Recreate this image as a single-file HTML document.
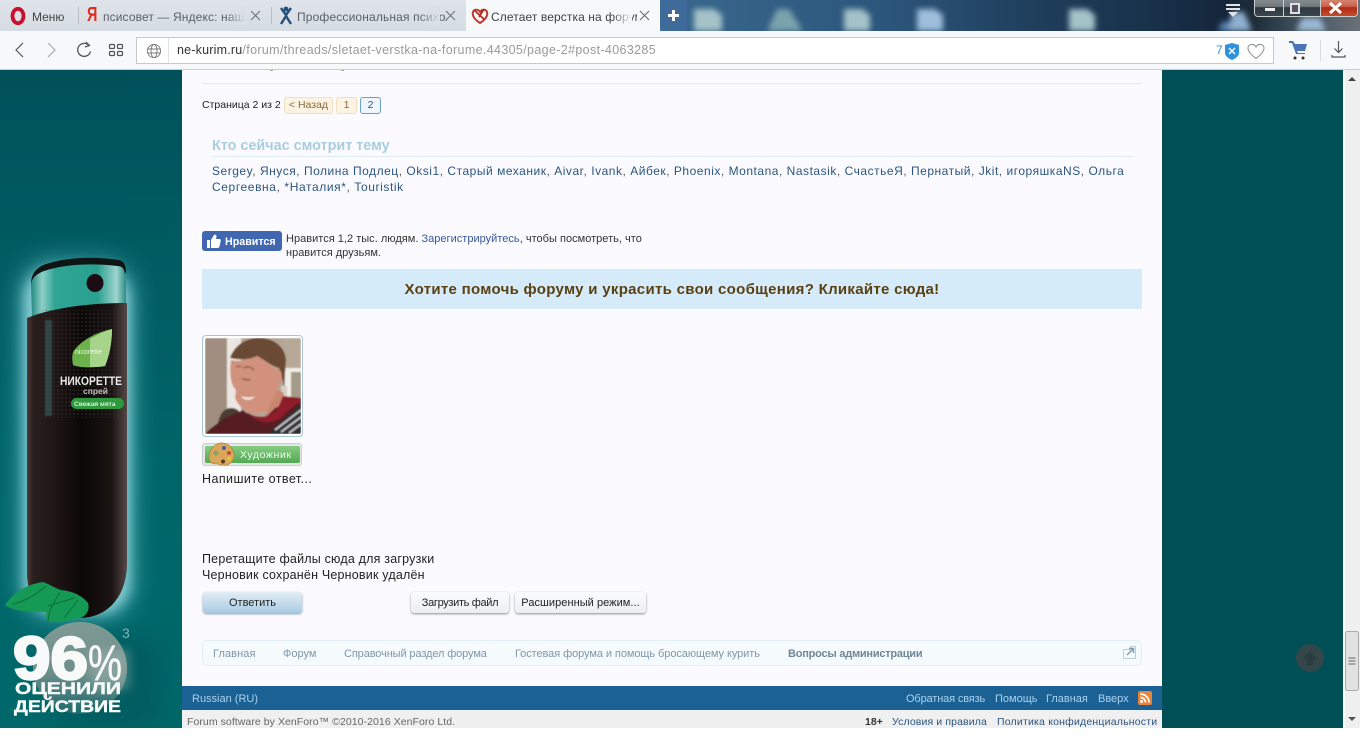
<!DOCTYPE html>
<html lang="ru"><head><meta charset="utf-8"><title>Слетает верстка на форуме</title>
<style>
html,body{margin:0;padding:0;background:#fff}
body{width:1360px;height:748px;position:relative;overflow:hidden;font-family:"Liberation Sans","Noto Sans CJK SC",sans-serif;color:#222}
.a{position:absolute;white-space:nowrap}
.l{color:#2b5580}
svg{display:block}
</style></head><body>

<!-- desktop strip -->
<div class="a" style="left:687px;top:0;width:673px;height:31px;overflow:hidden;background:linear-gradient(90deg,#38668c 0,#2c557a 30%,#20405e 50%,#18304a 70%,#14263a 80%,#1d2b38 84%,#465664 92%,#6a7078 100%)">
<svg width="673" height="31" style="filter:blur(3px)">
<path d="M7 9h20l8 6v16H7z" fill="#a4c2c8"/>
<path d="M90 9h12l14 22H80z" fill="#7ba3ac"/>
<path d="M157 9h18l8 6v16h-26z" fill="#a4c2c8"/>
<path d="M230 9h18l8 6v16h-26z" fill="#9ebedc"/>
<path d="M382 9h18l8 6v16h-26z" fill="#a4c2c8"/>
<path d="M535 22h26l4 9h-34z" fill="#5d85b8"/>
<path d="M545 12h12l8 19h-24z" fill="#8fb0d0"/>
<path d="M615 18h18l6 13h-30z" fill="#9ab8d2"/>
</svg></div>

<!-- tabs -->
<div class="a" style="left:0;top:0;width:466px;height:31px;background:linear-gradient(#dfe4ea,#d6dce3)"></div>
<div class="a" style="left:78px;top:7px;width:1px;height:17px;background:#b8bfc7"></div>
<div class="a" style="left:271px;top:7px;width:1px;height:17px;background:#b8bfc7"></div>
<div class="a" style="left:466px;top:0;width:193px;height:31px;background:#f6f8fa"></div>
<div class="a" style="left:660px;top:0;width:27px;height:31px;background:#3e6b9a"></div>
<div class="a" style="left:668px;top:14px;width:11px;height:3px;background:#fff"></div>
<div class="a" style="left:672px;top:10px;width:3px;height:11px;background:#fff"></div>

<svg class="a" style="left:9px;top:7px" width="18" height="18"><ellipse cx="9" cy="9" rx="5.500" ry="7.200" fill="none" stroke="#c8102e" stroke-width="3.800"/></svg>
<div class="a" style="left:32px;top:10px;font-size:12px;color:#444">Меню</div>

<div class="a" style="left:87px;top:5px;font-size:20px;font-weight:bold;color:#e32b1d;line-height:21px;transform:scaleX(.72);transform-origin:left top">Я</div>
<div class="a" style="left:103px;top:10px;width:143px;overflow:hidden;font-size:12px;color:#5a6068;letter-spacing:.12px">псисовет — Яндекс: нашлось</div>
<div class="a" style="left:226px;top:6px;width:20px;height:20px;background:linear-gradient(90deg,rgba(222,227,233,0),#dbe0e6)"></div>
<svg class="a" style="left:250px;top:10px" width="11" height="11"><path d="M1 1l9 9M10 1l-9 9" stroke="#6a7078" stroke-width="1"/></svg>

<svg class="a" style="left:279px;top:6px" width="14" height="20"><circle cx="7" cy="3" r="2.400" fill="#25507c"/><path d="M2 2l5 7 5-7M7 9v2M2 18l5-8 5 8" fill="none" stroke="#25507c" stroke-width="2.400"/></svg>
<div class="a" style="left:297px;top:10px;width:150px;overflow:hidden;font-size:12px;color:#5a6068;letter-spacing:.15px">Профессиональная психология</div>
<div class="a" style="left:420px;top:6px;width:20px;height:20px;background:linear-gradient(90deg,rgba(222,227,233,0),#dbe0e6)"></div>
<svg class="a" style="left:445px;top:10px" width="11" height="11"><path d="M1 1l9 9M10 1l-9 9" stroke="#6a7078" stroke-width="1"/></svg>

<svg class="a" style="left:471px;top:7px" width="18" height="18"><path d="M9 16C3 12 1 8 2 5c1-3 5-3 7 0 2-3 6-3 7 0 1 3-1 7-7 11z" fill="#fff" stroke="#c0392b" stroke-width="2"/><path d="M4 4l10 9M13 2L8 10" stroke="#b22a22" stroke-width="1.800"/></svg>
<div class="a" style="left:491px;top:10px;width:146px;overflow:hidden;font-size:12px;color:#3c4248;letter-spacing:.1px">Слетает верстка на форуме</div>
<div class="a" style="left:612px;top:6px;width:20px;height:20px;background:linear-gradient(90deg,rgba(246,248,250,0),#f6f8fa)"></div>
<svg class="a" style="left:639px;top:10px" width="11" height="11"><path d="M1 1l9 9M10 1l-9 9" stroke="#666" stroke-width="1"/></svg>

<!-- window controls -->
<svg class="a" style="left:1224px;top:3px" width="18" height="15"><path d="M2 1h14v2H2zM2 5h14v2H2z" fill="#dfe4e8"/><path d="M4 9h10l-5 5z" fill="#dfe4e8"/></svg>
<div class="a" style="left:1254px;top:-2px;width:104px;height:19px;border:1px solid #c8cdd0;border-radius:0 0 4px 4px;box-sizing:border-box;overflow:hidden;background:#3a4248">
<div class="a" style="left:0;top:0;width:28px;height:17px;border-right:1px solid #c8cdd0;background:linear-gradient(#878e92 0,#70787c 45%,#2e373e 50%,#3a454e 100%)"></div>
<div class="a" style="left:29px;top:0;width:36px;height:17px;border-right:1px solid #c8cdd0;background:linear-gradient(#878e92 0,#70787c 45%,#2e373e 50%,#3a454e 100%)"></div>
<div class="a" style="left:66px;top:0;width:38px;height:17px;background:linear-gradient(#d88a76 0,#c8604a 45%,#b02a16 50%,#c44c2a 100%)"></div>
<div class="a" style="left:10px;top:9px;width:10px;height:3px;background:#eee"></div>
<div class="a" style="left:35px;top:4px;width:6px;height:7px;border:2px solid #dde;background:#555"></div>
<svg class="a" style="left:73px;top:3px" width="15" height="12"><path d="M2 1l11 10M13 1L2 11" stroke="#fff" stroke-width="3"/></svg>
</div>

<!-- toolbar -->
<div class="a" style="left:0;top:31px;width:1360px;height:39px;background:#f7f8f9;border-bottom:1px solid #c8cdd0;box-sizing:border-box"></div>
<svg class="a" style="left:12px;top:40px" width="120" height="20" fill="none">
<path d="M11 3L4 10l7 7" stroke="#555" stroke-width="1.200"/>
<path d="M36 3l7 7-7 7" stroke="#aaa" stroke-width="1.200"/>
<path d="M77 5.500a6.500 6.500 0 1 0 1.500 6" stroke="#555" stroke-width="1.300"/><path d="M74 2l3.500 3.500L73 7" stroke="#555" stroke-width="1.200"/>
<rect x="97.500" y="4.500" width="5" height="4" rx="1" stroke="#555" stroke-width="1.200"/><rect x="105.500" y="4.500" width="5" height="4" rx="1" stroke="#555" stroke-width="1.200"/><rect x="97.500" y="11.500" width="5" height="4" rx="1" stroke="#555" stroke-width="1.200"/><rect x="105.500" y="11.500" width="5" height="4" rx="1" stroke="#555" stroke-width="1.200"/>
</svg>
<div class="a" style="left:136px;top:37px;width:1138px;height:27px;background:#fff;border:1px solid #c6cacc;box-sizing:border-box"></div>
<svg class="a" style="left:146px;top:43px" width="16" height="16" fill="none" stroke="#777" stroke-width=".9"><circle cx="8" cy="8" r="6.600"/><ellipse cx="8" cy="8" rx="3" ry="6.600"/><path d="M1.500 6h13M1.500 10h13"/></svg>
<div class="a" style="left:168px;top:38px;width:1px;height:25px;background:#e2e4e6"></div>
<div class="a" style="left:177px;top:43px;font-size:12.500px;color:#333;letter-spacing:.2px">ne-kurim.ru<span style="color:#999;letter-spacing:.35px">/forum/threads/sletaet-verstka-na-forume.44305/page-2#post-4063285</span></div>
<div class="a" style="left:1216px;top:43px;font-size:12px;color:#3f8cd0">7</div>
<svg class="a" style="left:1224px;top:43px" width="16" height="17"><path d="M1 2l7-2 7 2v8c0 3-4 6-7 7-3-1-7-4-7-7z" fill="#2d93dc"/><path d="M5 5l6 6M11 5l-6 6" stroke="#fff" stroke-width="1.500"/></svg>
<svg class="a" style="left:1247px;top:43px" width="18" height="17"><path d="M9 15.500C3 11 1 8 1 5c0-4 6-5 8-1 2-4 8-3 8 1 0 3-2 6-8 10.500z" fill="#fff" stroke="#8a8f93" stroke-width="1"/></svg>
<svg class="a" style="left:1288px;top:40px" width="20" height="20"><path d="M1 1h4l2 3h12l-2 7H9l1 2h7v1H8L4 3H1z" fill="#4a74b8"/><circle cx="7" cy="18" r="1.500" fill="#333"/><circle cx="15" cy="18" r="1.500" fill="#333"/></svg>
<div class="a" style="left:1320px;top:40px;width:1px;height:21px;background:#d8dbdd"></div>
<svg class="a" style="left:1331px;top:40px" width="15" height="20" fill="none" stroke="#555" stroke-width="1.200"><path d="M7.500 1v11M3.500 8.500l4 4 4-4M1 15v2h13v-2"/></svg>

<!-- page backgrounds -->
<div class="a" style="left:1162px;top:70px;width:181px;height:658px;background:#004f57"></div>
<div class="a" style="left:1345px;top:70px;width:15px;height:658px;background:#f0f0f0"></div>
<svg class="a" style="left:1344px;top:70px" width="16" height="658">
<path d="M4 11l4-4 4 4z" fill="#444"/>
<rect x="1.500" y="561.500" width="13" height="59" rx="2" fill="#e2e2e2" stroke="#aaa"/>
<path d="M4.500 588h7M4.500 591h7M4.500 594h7" stroke="#666"/>
<path d="M4 647h8l-4 4z" fill="#555"/>
</svg>
<div class="a" style="left:1296px;top:644px;width:28px;height:28px;border-radius:50%;background:#33464a"></div>
<svg class="a" style="left:1296px;top:644px" width="28" height="28"><path d="M14 7l7 8h-4v6h-6v-6H7z" fill="#2a3c40"/></svg>

<!-- left ad -->
<svg class="a" style="left:0;top:70px" width="182" height="658" viewBox="0 70 182 658">
<defs>
<linearGradient id="bg" x1="0" y1="0" x2="0" y2="1"><stop offset="0" stop-color="#00505a"/><stop offset=".22" stop-color="#005a60"/><stop offset=".6" stop-color="#006568"/><stop offset="1" stop-color="#00686a"/></linearGradient>
<filter id="b12" x="-60%" y="-25%" width="220%" height="150%"><feGaussianBlur stdDeviation="13"/></filter>
<filter id="b6" x="-40%" y="-20%" width="180%" height="140%"><feGaussianBlur stdDeviation="6"/></filter>
<filter id="b5" x="-30%" y="-20%" width="160%" height="140%"><feGaussianBlur stdDeviation="5"/></filter>
<filter id="b1"><feGaussianBlur stdDeviation=".7"/></filter>
<linearGradient id="body" x1="0" x2="1"><stop offset="0" stop-color="#4b3b37"/><stop offset=".06" stop-color="#2a1f1e"/><stop offset=".35" stop-color="#1a1212"/><stop offset=".55" stop-color="#0c0808"/><stop offset=".85" stop-color="#1b1413"/><stop offset="1" stop-color="#564947"/></linearGradient>
<linearGradient id="cap" x1="0" x2="1"><stop offset="0" stop-color="#228a80"/><stop offset=".12" stop-color="#8fcfc8"/><stop offset=".25" stop-color="#2fa595"/><stop offset=".7" stop-color="#2aa090"/><stop offset=".9" stop-color="#9fd4cf"/><stop offset="1" stop-color="#2b8c80"/></linearGradient>
<linearGradient id="sph" x1="0" y1="0" x2="0" y2="1"><stop offset="0" stop-color="#7f9a94"/><stop offset=".55" stop-color="#6e8e8a"/><stop offset="1" stop-color="#1d6a6c"/></linearGradient>
<pattern id="dots" width="4" height="4" patternUnits="userSpaceOnUse"><circle cx="2" cy="2" r=".8" fill="#3c3a38"/></pattern>
</defs>
<rect x="0" y="70" width="182" height="658" fill="url(#bg)"/>
<rect x="22" y="262" width="110" height="355" rx="30" fill="#4fb0ba" opacity=".9" filter="url(#b12)"/>
<rect x="24" y="268" width="106" height="345" rx="30" fill="#a2dde4" opacity=".75" filter="url(#b6)"/>
<rect x="60" y="640" width="100" height="88" fill="#004f55" opacity=".45" filter="url(#b12)"/>
<!-- cap -->
<path d="M31 284c0-9 4-15 12-19 22-8 52-9 76-5 5 1 7 5 7 9v40l-94 10z" fill="url(#cap)"/>
<path d="M31 284c0-9 4-15 12-19 22-8 52-9 76-5 5 1 7 5 7 12l-1 2c-1-6-3-8-8-8-25-3-52-2-73 5-8 3-12 7-13 13z" fill="#0f1414"/>
<ellipse cx="95" cy="283" rx="8.500" ry="9" fill="#1c0c14"/>
<!-- body -->
<path d="M27 318c30-12 70-15 100-15v260c0 32-18 55-48 55h-8c-28 0-44-18-44-45z" fill="url(#body)"/>
<rect x="42" y="310" width="84" height="108" fill="url(#dots)" opacity=".8"/>
<rect x="45" y="320" width="7" height="96" fill="#3d6a68" opacity=".55" filter="url(#b1)"/>
<path d="M73 352c8-12 24-20 39-23 0 14-3 28-7 37-10 2-25 2-32-1-1-5-1-9 0-13z" fill="#6cb24a"/>
<path d="M90 339c7-4 15-8 22-10 0 14-3 28-7 37-5 1-10 1-15 1z" fill="#a5d48a"/>
<text x="75" y="354" font-family="Liberation Sans" font-size="7" fill="#f0f5ea">nicorette</text>
<text x="60" y="385" font-family="Liberation Sans" font-weight="bold" font-size="12" fill="#e8e8e8" textLength="62" lengthAdjust="spacingAndGlyphs">НИКОРЕТТЕ</text>
<text x="83" y="394" font-family="Liberation Sans" font-weight="bold" font-size="8.500" fill="#c4c4c4">спрей</text>
<rect x="71" y="398" width="53" height="11" rx="5.500" fill="#2e9a3d"/>
<text x="74" y="406" font-family="Liberation Sans" font-weight="bold" font-size="6.500" fill="#d6f0d8">Свежая мята</text>
<!-- leaves -->
<path d="M5 605c8-12 22-21 38-23 6 2 12 6 18 8 9 1 20 4 27 13 2 6-1 13-8 15-8 2-20 4-32 4-1-3-2-6-2-10-12-1-30 1-41-7z" fill="#159a55"/>
<path d="M12 604c12-2 22-8 34-18M60 592c-6 10-12 20-12 30M48 606l26-8M64 618l14-18" stroke="#0d6d3a" stroke-width="1" fill="none"/>
<!-- sphere -->
<ellipse cx="80" cy="668" rx="47" ry="46" fill="url(#sph)"/>
<rect x="90" y="650" width="40" height="40" fill="#b7c5c0" opacity=".35" filter="url(#b5)"/>
<!-- text -->
<text x="13" y="679" font-family="Liberation Sans" font-weight="bold" font-size="60" fill="#f8fafa" stroke="#f8fafa" stroke-width="2.500" textLength="75" lengthAdjust="spacingAndGlyphs">96</text>
<text x="88" y="680" font-family="Liberation Sans" font-size="50" fill="#f8fafa" stroke="#f8fafa" stroke-width=".5" textLength="34" lengthAdjust="spacingAndGlyphs">%</text>
<text x="122" y="638" font-family="Liberation Sans" font-size="14" fill="#7fb4b4">3</text>
<text x="15" y="694" font-family="Liberation Sans" font-weight="bold" font-size="16.500" fill="#f8fafa" stroke="#f8fafa" stroke-width=".4" textLength="106" lengthAdjust="spacingAndGlyphs">ОЦЕНИЛИ</text>
<text x="14" y="712" font-family="Liberation Sans" font-weight="bold" font-size="16.500" fill="#f8fafa" stroke="#f8fafa" stroke-width=".4" textLength="107" lengthAdjust="spacingAndGlyphs">ДЕЙСТВИЕ</text>
</svg>

<!-- content column -->
<div class="a" style="left:182px;top:70px;width:980px;height:616px;background:#fbfbff"></div>
<div class="a" style="left:270px;top:70px;width:3px;height:1px;background:#aaa"></div>
<div class="a" style="left:341px;top:70px;width:3px;height:1px;background:#aaa"></div>
<div class="a" style="left:202px;top:83px;width:940px;height:1px;background:#dfeaf0"></div>

<div class="a" style="left:202px;top:99px;font-size:10.500px;line-height:13px;color:#222">Страница 2 из 2</div>
<div class="a" style="left:284px;top:97px;width:49px;height:17px;box-sizing:border-box;background:#fdf3e2;border:1px solid #f0dfc0;border-radius:3px;font-size:10.500px;line-height:15px;text-align:center;color:#8a6a3a">&lt; Назад</div>
<div class="a" style="left:336px;top:97px;width:21px;height:17px;box-sizing:border-box;background:#fdf3e2;border:1px solid #f0dfc0;border-radius:3px;font-size:10.500px;line-height:15px;text-align:center;color:#8a6a3a">1</div>
<div class="a" style="left:360px;top:97px;width:21px;height:17px;box-sizing:border-box;background:#eef6fb;border:1px solid #6c9fc0;border-radius:3px;font-size:10.500px;line-height:15px;text-align:center;color:#2b5580">2</div>

<div class="a" style="left:212px;top:138px;font-size:14.400px;line-height:16px;font-weight:bold;color:#a9cde0">Кто сейчас смотрит тему</div>
<div class="a" style="left:212px;top:156px;width:921px;height:1px;background:#dcebf2"></div>
<div class="a l" style="left:212px;top:163px;font-size:12px;line-height:16px;letter-spacing:.52px">Sergey<span style="color:#555">,</span> Януся<span style="color:#555">,</span> Полина Подлец<span style="color:#555">,</span> Oksi1<span style="color:#555">,</span> Старый механик<span style="color:#555">,</span> Aivar<span style="color:#555">,</span> Ivank<span style="color:#555">,</span> Айбек<span style="color:#555">,</span> Phoenix<span style="color:#555">,</span> Montana<span style="color:#555">,</span> Nastasik<span style="color:#555">,</span> СчастьеЯ<span style="color:#555">,</span> Пернатый<span style="color:#555">,</span> Jkit<span style="color:#555">,</span> игоряшкаNS<span style="color:#555">,</span> Ольга</div>
<div class="a l" style="left:212px;top:179px;font-size:12px;line-height:16px;letter-spacing:.6px">Сергеевна<span style="color:#555">,</span> *Наталия*<span style="color:#555">,</span> Touristik</div>

<!-- like -->
<div class="a" style="left:202px;top:231px;width:80px;height:20px;background:#4267b2;border-radius:3px"></div>
<svg class="a" style="left:206px;top:234px" width="15" height="14"><path d="M1 6h3v8H1zM5 6l3-5c1-1 2.500 0 2.500 1.500L10 5h3.500c1 0 1.500 1 1.200 2l-1.200 5.500c-.2 1-1 1.500-2 1.500H5z" fill="#fff"/></svg>
<div class="a" style="left:225px;top:235px;font-size:10.700px;line-height:14px;font-weight:bold;color:#fff">Нравится</div>
<div class="a" style="left:286px;top:232px;font-size:11px;line-height:14px;color:#333;letter-spacing:.02px">Нравится 1,2 тыс. людям. <span style="color:#365899">Зарегистрируйтесь</span>, чтобы посмотреть, что</div>
<div class="a" style="left:286px;top:246px;font-size:11px;line-height:14px;color:#333">нравится друзьям.</div>

<!-- banner -->
<div class="a" style="left:202px;top:269px;width:940px;height:40px;background:#d6ebfa;border-radius:2px;font-weight:bold;font-size:15px;line-height:41px;text-align:center;color:#5a4010;letter-spacing:.3px">Хотите помочь форуму и украсить свои сообщения? Кликайте сюда!</div>

<!-- avatar -->
<div class="a" style="left:202px;top:335px;width:101px;height:102px;box-sizing:border-box;background:#fff;border:1px solid #a9c5d6;border-radius:4px"></div>
<svg class="a" style="left:205px;top:338px" width="96" height="96">
<defs><filter id="av"><feGaussianBlur stdDeviation=".9"/></filter><clipPath id="avc"><rect width="96" height="96" rx="2"/></clipPath></defs>
<g clip-path="url(#avc)"><g filter="url(#av)">
<rect width="96" height="96" fill="#b5a596"/>
<rect x="0" y="0" width="22" height="96" fill="#a08f80"/>
<rect x="22" y="0" width="14" height="76" fill="#ece6e2"/>
<rect x="80" y="0" width="16" height="30" fill="#b8a898"/>
<rect x="80" y="30" width="16" height="36" fill="#f0ece6"/>
<rect x="86" y="34" width="10" height="30" fill="#a39a88"/>
<rect x="76" y="48" width="6" height="24" fill="#d8cfc6"/>
<path d="M12 96c0-14 4-26 14-26 8 0 10 6 12 10l-6 16z" fill="#4a3c30"/>
<path d="M25 20C30 6 42 0 54 0c14 0 26 8 27 22l-2 26-5-18c-8-2-14-8-22-12-8 4-18 4-27 2z" fill="#6b4a34"/>
<path d="M26 22c8 2 18 0 26-4 8 4 14 10 20 14 4-2 6 4 4 12l-4 8-2 14c-8 10-20 12-30 6-6-4-8-8-10-12l1-8c-5-4-7-16-5-30z" fill="#d2917d"/>
<path d="M38 30c4-2 8-1 11 2" stroke="#8e5f4c" stroke-width="1.400" fill="none"/>
<path d="M31 29c2-1 4-1 5 0" stroke="#8e5f4c" stroke-width="1.400" fill="none"/>
<path d="M37 41l8 1" stroke="#6e4636" stroke-width="1.300"/>
<path d="M36 58c5 2 10 2 14 0-3 5-11 5-14 0z" fill="#f5eee8"/>
<path d="M60 78l12-26 6 2 2 12-12 14z" fill="#c9876f"/>
<path d="M0 96c5-6 12-10 20-16l18-8c6 6 16 8 24 6l8-8 26-10v36z" fill="#571a24"/>
<path d="M62 96l34-30v30z" fill="#2d2d31"/>
<path d="M70 92l26-20M76 94l20-15M84 95l12-9" stroke="#c5c7c9" stroke-width="2"/>
<path d="M42 74c8 6 18 6 24 2 8-4 10-14 12-18l18 2v4c-6 2-12 8-20 16-12 8-26 4-34-6z" fill="#8e1c2c"/>
</g></g></svg>

<!-- badge -->
<div class="a" style="left:202px;top:443px;width:100px;height:23px;box-sizing:border-box;background:#e3e8e6;border:1px solid #c8d0cb;border-radius:3px"></div>
<div class="a" style="left:205px;top:446px;width:95px;height:17px;background:linear-gradient(#86cc82,#54a954);border-radius:2px"></div>
<svg class="a" style="left:206px;top:441px" width="32" height="26"><path d="M14 2c10-1 15 8 14 14-1 5-5 9-11 8-4 0-6-2-8-1-3 0-7-3-6-8 1-7 5-12 11-13z" fill="#d9a75a" stroke="#a87a35" stroke-width=".6"/><circle cx="18" cy="7" r="2" fill="#4a5aa8"/><circle cx="23" cy="12" r="2" fill="#c94a3a"/><circle cx="23" cy="17.500" r="2" fill="#e0c840"/><circle cx="17" cy="20.500" r="2" fill="#5a3a2a"/><circle cx="10" cy="12" r="2.500" fill="#8a9f6a"/></svg>
<div class="a" style="left:240px;top:449px;font-size:10.500px;line-height:13px;color:#f2fbf2;letter-spacing:.6px">Художник</div>

<div class="a" style="left:202px;top:471px;font-size:12.500px;line-height:16px;color:#222;letter-spacing:.43px">Напишите ответ...</div>
<div class="a" style="left:202px;top:551px;font-size:12.500px;line-height:16px;color:#222;letter-spacing:.2px">Перетащите файлы сюда для загрузки</div>
<div class="a" style="left:202px;top:567px;font-size:12.500px;line-height:16px;color:#222;letter-spacing:.2px">Черновик сохранён Черновик удалён</div>

<!-- buttons -->
<div class="a" style="left:203px;top:592px;width:99px;height:21px;background:linear-gradient(#e2edf5,#a9cbe2);border-radius:3px;box-shadow:0 1px 2px #8a9aa6;font-size:11px;line-height:22px;text-align:center;color:#222">Ответить</div>
<div class="a" style="left:411px;top:592px;width:98px;height:21px;background:linear-gradient(#fbfbfd,#eceef2);border-radius:3px;box-shadow:0 1px 2px #8a8f96;font-size:11px;line-height:22px;text-align:center;color:#222;letter-spacing:-.33px">Загрузить файл</div>
<div class="a" style="left:515px;top:592px;width:131px;height:21px;background:linear-gradient(#fbfbfd,#eceef2);border-radius:3px;box-shadow:0 1px 2px #8a8f96;font-size:11px;line-height:22px;text-align:center;color:#222;letter-spacing:.05px">Расширенный режим...</div>

<!-- breadcrumb -->
<div class="a" style="left:202px;top:640px;width:940px;height:26px;box-sizing:border-box;background:#f5fafd;border:1px solid #e3eff6;border-radius:5px"></div>
<div class="a" style="left:213px;top:647px;font-size:11px;line-height:14px;color:#7f97a8;letter-spacing:.1px">Главная</div>
<div class="a" style="left:283px;top:647px;font-size:11px;line-height:14px;color:#7f97a8">Форум</div>
<div class="a" style="left:344px;top:647px;font-size:11px;line-height:14px;color:#7f97a8;letter-spacing:-.11px">Справочный раздел форума</div>
<div class="a" style="left:515px;top:647px;font-size:11px;line-height:14px;color:#7f97a8;letter-spacing:-.07px">Гостевая форума и помощь бросающему курить</div>
<div class="a" style="left:788px;top:647px;font-size:11px;line-height:14px;font-weight:bold;color:#6f8797;letter-spacing:-.23px">Вопросы администрации</div>
<svg class="a" style="left:1122px;top:645px" width="15" height="15"><path d="M1.500 4.500h7v-3h5v12h-12z" fill="#f5fafd" stroke="#b9cfdb"/><path d="M5 10l6-6M7 3.500h4.500V8" stroke="#7da0b5" stroke-width="1.500" fill="none"/></svg>

<!-- footer -->
<div class="a" style="left:182px;top:686px;width:980px;height:24px;background:#1b6193"></div>
<div class="a" style="left:192px;top:692px;font-size:11px;line-height:14px;color:#a9d2ee">Russian (RU)</div>
<div class="a" style="left:906px;top:692px;font-size:11px;line-height:14px;color:#a9d2ee;letter-spacing:-.14px">Обратная связь</div>
<div class="a" style="left:995px;top:692px;font-size:11px;line-height:14px;color:#a9d2ee">Помощь</div>
<div class="a" style="left:1046px;top:692px;font-size:11px;line-height:14px;color:#a9d2ee">Главная</div>
<div class="a" style="left:1098px;top:692px;font-size:11px;line-height:14px;color:#a9d2ee">Вверх</div>
<svg class="a" style="left:1138px;top:691px" width="14" height="14"><rect width="14" height="14" rx="2" fill="#e8833a"/><circle cx="3.500" cy="10.500" r="1.500" fill="#fff"/><path d="M2.500 6.500a5 5 0 0 1 5 5M2.500 3a8.500 8.500 0 0 1 8.500 8.500" stroke="#fff" stroke-width="1.700" fill="none"/></svg>

<div class="a" style="left:182px;top:710px;width:980px;height:18px;background:#f0f0f0;overflow:hidden"></div>
<div class="a" style="left:187px;top:716px;height:12px;overflow:hidden;font-size:10.500px;line-height:12px;color:#666;letter-spacing:.06px">Forum software by XenForo™ ©2010-2016 XenForo Ltd.</div>
<div class="a" style="left:865px;top:716px;height:12px;overflow:hidden;font-size:10.500px;line-height:12px;font-weight:bold;color:#333">18+</div>
<div class="a" style="left:892px;top:716px;height:12px;overflow:hidden;font-size:10.500px;line-height:12px;color:#2b5580;letter-spacing:.12px">Условия и правила</div>
<div class="a" style="left:997px;top:716px;height:12px;overflow:hidden;font-size:10.500px;line-height:12px;color:#2b5580;letter-spacing:.2px">Политика конфиденциальности</div>

</body></html>
